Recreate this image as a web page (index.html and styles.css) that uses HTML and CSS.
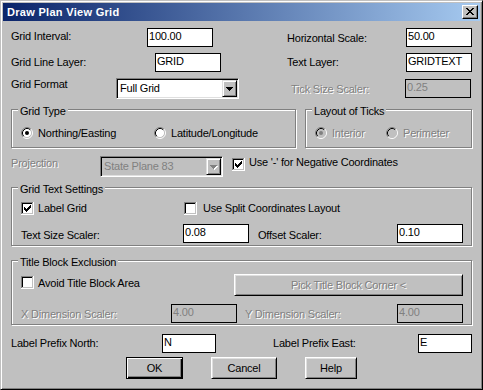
FILE: index.html
```html
<!DOCTYPE html>
<html>
<head>
<meta charset="utf-8">
<title>Draw Plan View Grid</title>
<link rel="stylesheet" href="styles.css">
</head>
<body>
<div class="window">
  <div class="titlebar">
    <span class="title">Draw Plan View Grid</span>
    <span class="close-btn"><svg width="14" height="12" viewBox="0 0 14 12" shape-rendering="crispEdges"><path fill="#000" d="M3 2h2v1H3zM9 2h2v1H9zM4 3h2v1H4zM8 3h2v1H8zM5 4h4v1H5zM6 5h2v1H6zM5 6h4v1H5zM4 7h2v1H4zM8 7h2v1H8zM3 8h2v1H3zM9 8h2v1H9z"/></svg></span>
  </div>

  <div class="dialog">
    <div class="row row-1">
      <span class="lbl pt2">Grid Interval:</span>
      <span class="field">100.00</span>
      <span class="lbl pt4 col4">Horizontal Scale:</span>
      <span class="field">50.00</span>
    </div>

    <div class="row row-2">
      <span class="lbl pt3">Grid Line Layer:</span>
      <span class="field">GRID</span>
      <span class="lbl pt3 col4">Text Layer:</span>
      <span class="field">GRIDTEXT</span>
    </div>

    <div class="row row-3">
      <span class="lbl">Grid Format</span>
      <span class="select">
        <span class="select-value">Full Grid</span>
        <span class="drop-btn"><svg width="7" height="4" viewBox="0 0 7 4" shape-rendering="crispEdges"><path fill="#000" d="M0 0h7v1H0zM1 1h5v1H1zM2 2h3v1H2zM3 3h1v1H3z"/></svg></span>
      </span>
      <span class="lbl pt5 dis col4">Tick Size Scaler:</span>
      <span class="field off mt1">0.25</span>
    </div>

    <div class="group-row">
      <fieldset class="group group-type">
        <legend>Grid Type</legend>
        <div class="opts">
          <span class="opt w-north">
            <svg class="radio" width="12" height="12" viewBox="0 0 12 12"><circle class="face" cx="6" cy="6" r="4.5"/><path d="M2.11 9.89A5.5 5.5 0 0 1 9.89 2.11" fill="none" stroke="#808080"/><path d="M9.89 2.11A5.5 5.5 0 0 1 2.11 9.89" fill="none" stroke="#fff"/><path d="M2.82 9.18A4.5 4.5 0 0 1 9.18 2.82" fill="none" stroke="#000"/><path d="M9.18 2.82A4.5 4.5 0 0 1 2.82 9.18" fill="none" stroke="#c0c0c0"/><circle class="dot" cx="6" cy="6" r="2"/></svg>
            <span>Northing/Easting</span>
          </span>
          <span class="opt">
            <svg class="radio" width="12" height="12" viewBox="0 0 12 12"><circle class="face" cx="6" cy="6" r="4.5"/><path d="M2.11 9.89A5.5 5.5 0 0 1 9.89 2.11" fill="none" stroke="#808080"/><path d="M9.89 2.11A5.5 5.5 0 0 1 2.11 9.89" fill="none" stroke="#fff"/><path d="M2.82 9.18A4.5 4.5 0 0 1 9.18 2.82" fill="none" stroke="#000"/><path d="M9.18 2.82A4.5 4.5 0 0 1 2.82 9.18" fill="none" stroke="#c0c0c0"/></svg>
            <span>Latitude/Longitude</span>
          </span>
        </div>
      </fieldset>

      <fieldset class="group group-ticks">
        <legend>Layout of Ticks</legend>
        <div class="opts">
          <span class="opt w-interior dis">
            <svg class="radio off" width="12" height="12" viewBox="0 0 12 12"><circle class="face" cx="6" cy="6" r="4.5"/><path d="M2.11 9.89A5.5 5.5 0 0 1 9.89 2.11" fill="none" stroke="#808080"/><path d="M9.89 2.11A5.5 5.5 0 0 1 2.11 9.89" fill="none" stroke="#fff"/><path d="M2.82 9.18A4.5 4.5 0 0 1 9.18 2.82" fill="none" stroke="#000"/><path d="M9.18 2.82A4.5 4.5 0 0 1 2.82 9.18" fill="none" stroke="#c0c0c0"/><circle class="dot" cx="6" cy="6" r="2"/></svg>
            <span>Interior</span>
          </span>
          <span class="opt dis">
            <svg class="radio off" width="12" height="12" viewBox="0 0 12 12"><circle class="face" cx="6" cy="6" r="4.5"/><path d="M2.11 9.89A5.5 5.5 0 0 1 9.89 2.11" fill="none" stroke="#808080"/><path d="M9.89 2.11A5.5 5.5 0 0 1 2.11 9.89" fill="none" stroke="#fff"/><path d="M2.82 9.18A4.5 4.5 0 0 1 9.18 2.82" fill="none" stroke="#000"/><path d="M9.18 2.82A4.5 4.5 0 0 1 2.82 9.18" fill="none" stroke="#c0c0c0"/></svg>
            <span>Perimeter</span>
          </span>
        </div>
      </fieldset>
    </div>

    <div class="row row-proj">
      <span class="lbl pt1 dis">Projection</span>
      <span class="select off">
        <span class="select-value">State Plane 83</span>
        <span class="drop-btn"><svg width="8" height="5" viewBox="0 0 8 5" shape-rendering="crispEdges"><path fill="#fff" d="M1 1h7v1H1zM2 2h5v1H2zM3 3h3v1H3zM4 4h1v1H4z"/><path fill="#808080" d="M0 0h7v1H0zM1 1h5v1H1zM2 2h3v1H2zM3 3h1v1H3z"/></svg></span>
      </span>
      <span class="check-item cb-mt2 col4">
        <svg class="check" width="13" height="13" viewBox="0 0 13 13" shape-rendering="crispEdges"><path d="M0 0h12v1H1v11H0z" fill="#808080"/><path d="M12 0h1v13H0v-1h12z" fill="#fff"/><path d="M1 1h10v1H2v9H1z" fill="#000"/><path d="M11 1h1v11H1v-1h10z" fill="#c0c0c0"/><rect x="2" y="2" width="9" height="9" fill="#fff"/><path fill="#000" d="M9 3h1v1H9zM8 4h2v1H8zM3 5h1v1H3zM7 5h3v1H7zM3 6h2v1H3zM6 6h3v1H6zM3 7h5v1H3zM4 8h3v1H4zM5 9h1v1H5z"/></svg>
        <span>Use '-' for Negative Coordinates</span>
      </span>
    </div>

    <fieldset class="group group-text">
      <legend>Grid Text Settings</legend>
      <div class="checks">
        <span class="check-item w-label">
          <svg class="check" width="13" height="13" viewBox="0 0 13 13" shape-rendering="crispEdges"><path d="M0 0h12v1H1v11H0z" fill="#808080"/><path d="M12 0h1v13H0v-1h12z" fill="#fff"/><path d="M1 1h10v1H2v9H1z" fill="#000"/><path d="M11 1h1v11H1v-1h10z" fill="#c0c0c0"/><rect x="2" y="2" width="9" height="9" fill="#fff"/><path fill="#000" d="M9 3h1v1H9zM8 4h2v1H8zM3 5h1v1H3zM7 5h3v1H7zM3 6h2v1H3zM6 6h3v1H6zM3 7h5v1H3zM4 8h3v1H4zM5 9h1v1H5z"/></svg>
          <span>Label Grid</span>
        </span>
        <span class="check-item gap6">
          <svg class="check" width="13" height="13" viewBox="0 0 13 13" shape-rendering="crispEdges"><path d="M0 0h12v1H1v11H0z" fill="#808080"/><path d="M12 0h1v13H0v-1h12z" fill="#fff"/><path d="M1 1h10v1H2v9H1z" fill="#000"/><path d="M11 1h1v11H1v-1h10z" fill="#c0c0c0"/><rect x="2" y="2" width="9" height="9" fill="#fff"/></svg>
          <span>Use Split Coordinates Layout</span>
        </span>
      </div>
      <div class="row row-text">
        <span class="lbl pt5">Text Size Scaler:</span>
        <span class="field">0.08</span>
        <span class="lbl pt5 col4">Offset Scaler:</span>
        <span class="field">0.10</span>
      </div>
    </fieldset>

    <fieldset class="group group-block">
      <legend>Title Block Exclusion</legend>
      <div class="row row-block1">
        <span class="check-item cb-mt2">
          <svg class="check" width="13" height="13" viewBox="0 0 13 13" shape-rendering="crispEdges"><path d="M0 0h12v1H1v11H0z" fill="#808080"/><path d="M12 0h1v13H0v-1h12z" fill="#fff"/><path d="M1 1h10v1H2v9H1z" fill="#000"/><path d="M11 1h1v11H1v-1h10z" fill="#c0c0c0"/><rect x="2" y="2" width="9" height="9" fill="#fff"/></svg>
          <span class="pt3">Avoid Title Block Area</span>
        </span>
        <span class="btn dis">Pick Title Block Corner &lt;</span>
      </div>
      <div class="row row-block2">
        <span class="lbl pt4 dis">X Dimension Scaler:</span>
        <span class="field off">4.00</span>
        <span class="lbl pt4 dis col4">Y Dimension Scaler:</span>
        <span class="field off">4.00</span>
      </div>
    </fieldset>

    <div class="row row-prefix">
      <span class="lbl pt3">Label Prefix North:</span>
      <span class="field">N</span>
      <span class="lbl pt3 col4">Label Prefix East:</span>
      <span class="field">E</span>
    </div>

    <div class="buttons">
      <span class="btn btn-default btn-ok">OK</span>
      <span class="btn btn-cancel">Cancel</span>
      <span class="btn btn-help">Help</span>
    </div>
  </div>
</div>
</body>
</html>
```

FILE: styles.css
```css
* {
  box-sizing: border-box;
}

html,
body {
  margin: 0;
  padding: 0;
}

body {
  background: #c0c0c0;
  font-family: "Liberation Sans", Arial, sans-serif;
  font-size: 11px;
  line-height: 13px;
  letter-spacing: -0.2px;
  color: #000;
}

svg {
  display: block;
  flex: none;
}

/* ---------- window frame ---------- */
.window {
  width: 483px;
  height: 390px;
  padding: 2px;
  border: 1px solid;
  border-color: #c0c0c0 #000 #000 #c0c0c0;
  box-shadow: inset 1px 1px 0 #fff, inset -1px -1px 0 #808080;
  background: #c0c0c0;
}

.titlebar {
  height: 18px;
  display: flex;
  align-items: center;
  justify-content: space-between;
  padding: 0 2px 0 4px;
  background: linear-gradient(to right, #0a246a, #a6caf0);
}

.title {
  color: #fff;
  font-weight: bold;
  letter-spacing: 0.3px;
  line-height: 18px;
}

.close-btn {
  display: block;
  width: 16px;
  height: 14px;
  background: #c0c0c0;
  border: 1px solid;
  border-color: #fff #000 #000 #fff;
  box-shadow: inset -1px -1px 0 #808080;
}

.dialog {
  padding: 0 8px;
}

/* ---------- generic rows ---------- */
.row {
  display: grid;
  align-items: start;
}

.col4 {
  grid-column: 4;
}

.lbl {
  display: block;
  white-space: nowrap;
}

.pt1 { padding-top: 1px; }
.pt2 { padding-top: 2px; }
.pt3 { padding-top: 3px; }
.pt4 { padding-top: 4px; }
.pt5 { padding-top: 5px; }
.mt1 { margin-top: 1px; }

.dis {
  color: #808080;
  text-shadow: 1px 1px 0 #fff;
}

.row-1 {
  margin-top: 7px;
  grid-template-columns: 136px 66px 74px 119px 66px;
}

.row-2 {
  margin-top: 6px;
  grid-template-columns: 144px 66px 66px 119px 66px;
}

.row-3 {
  margin-top: 6px;
  grid-template-columns: 105px 123px 52px 114px 66px;
}

.row-proj {
  margin-top: 8px;
  grid-template-columns: 89px 123px 9px auto;
}

.row-text {
  margin-top: 9px;
  grid-template-columns: 162px 66px 9px 139px 66px;
}

.row-block1 {
  grid-template-columns: 213px 229px;
}

.row-block2 {
  margin-top: 8px;
  grid-template-columns: 150px 66px 8px 152px 66px;
}

.row-prefix {
  margin-top: 9px;
  grid-template-columns: 151px 54px 57px 145px 54px;
}

/* ---------- edit fields ---------- */
.field {
  display: block;
  height: 19px;
  border: 1px solid #000;
  background: #fff;
  padding: 1px 0 0 1px;
  white-space: nowrap;
  overflow: hidden;
}

.field.off {
  background: #c0c0c0;
  color: #808080;
}

/* ---------- combo boxes ---------- */
.select {
  display: flex;
  height: 21px;
  border: 1px solid;
  border-color: #808080 #fff #fff #808080;
  box-shadow: inset 1px 1px 0 #000, inset -1px -1px 0 #dfdfdf;
  background: #fff;
  padding: 1px;
}

.select.off {
  background: #c0c0c0;
  color: #808080;
}

.select-value {
  flex: 1;
  padding: 2px 0 0 2px;
  white-space: nowrap;
}

.drop-btn {
  width: 15px;
  height: 17px;
  display: flex;
  align-items: center;
  justify-content: center;
  background: #c0c0c0;
  border: 1px solid;
  border-color: #dfdfdf #000 #000 #dfdfdf;
  box-shadow: inset 1px 1px 0 #fff, inset -1px -1px 0 #808080;
  padding-top: 1px;
}

/* ---------- group boxes ---------- */
.group {
  margin: 0;
  min-width: 0;
  border: 1px solid #808080;
  box-shadow: inset 1px 1px 0 #fff, 1px 1px 0 #fff;
  padding: 8px 0 7px 9px;
}

.group legend {
  margin-left: -3px;
  padding: 4px 2px 0;
  line-height: 13px;
  background: #c0c0c0;
}

.group-row {
  display: flex;
  gap: 9px;
  margin-top: 2px;
}

.group-type {
  width: 285px;
}

.group-ticks {
  width: 167px;
}

.group-text {
  margin-top: 2px;
  padding: 6px 0 2px 9px;
}

.group-block {
  margin-top: 6px;
  padding: 5px 0 1px 9px;
}

/* ---------- radios / checks ---------- */
.opts {
  display: flex;
  height: 14px;
  align-items: center;
}

.opt {
  display: flex;
  align-items: center;
  gap: 5px;
  white-space: nowrap;
}

.w-north {
  width: 133px;
}

.w-interior {
  width: 71px;
}

.radio .face {
  fill: #fff;
}

.radio .dot {
  fill: #000;
}

.radio.off .face {
  fill: #c0c0c0;
}

.radio.off .dot {
  fill: #808080;
}

.checks {
  display: flex;
  height: 13px;
}

.check-item {
  display: flex;
  align-items: flex-start;
  gap: 4px;
  white-space: nowrap;
}

.cb-mt2 .check {
  margin-top: 2px;
}

.gap6 {
  gap: 6px;
}

.w-label {
  width: 163px;
}

/* ---------- push buttons ---------- */
.btn {
  display: flex;
  align-items: center;
  justify-content: center;
  height: 22px;
  background: #c0c0c0;
  border: 1px solid;
  border-color: #fff #000 #000 #fff;
  box-shadow: inset 1px 1px 0 #dfdfdf, inset -1px -1px 0 #808080;
  white-space: nowrap;
}

.btn-default {
  border-color: #000;
  box-shadow: inset 1px 1px 0 #fff, inset -1px -1px 0 #000, inset -2px -2px 0 #808080;
}

.buttons {
  display: flex;
  justify-content: center;
  gap: 28px;
  margin-top: 4px;
}

.btn-ok {
  width: 57px;
}

.btn-cancel {
  width: 66px;
}

.btn-help {
  width: 52px;
}
```
